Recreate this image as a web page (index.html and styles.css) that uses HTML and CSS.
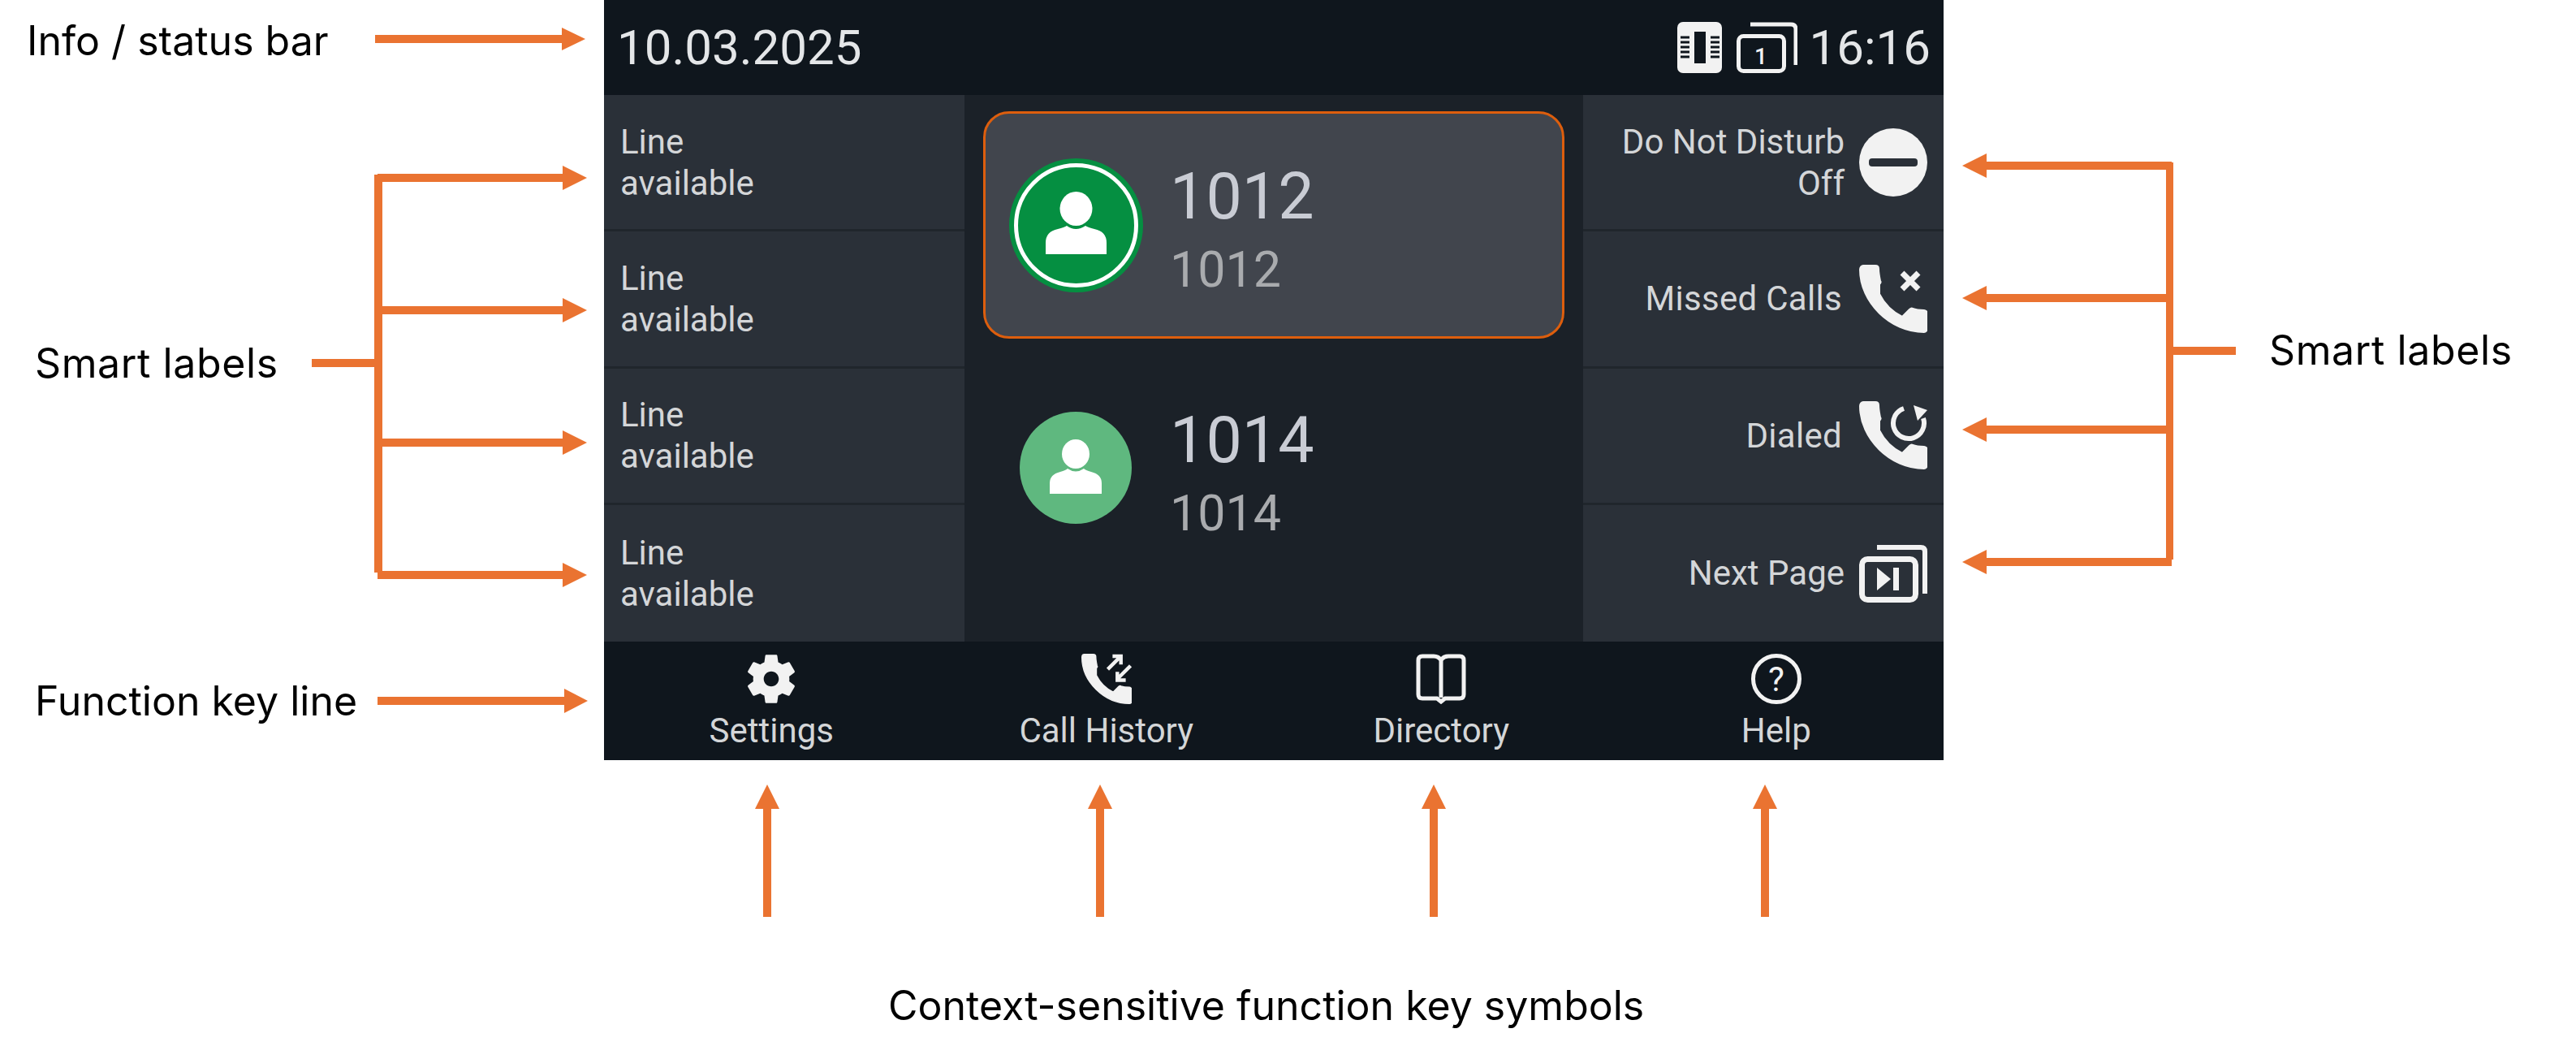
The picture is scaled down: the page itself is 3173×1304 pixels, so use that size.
FILE: index.html
```html
<!DOCTYPE html>
<html lang="en">
<head>
  <meta charset="UTF-8">
  <title>Phone display overview</title>
  <link rel="stylesheet" href="styles.css">
</head>
<body>
  <div class="stage">

    <!-- Phone display -->
    <div class="phone">
      <div class="status-bar">
        <span class="date">10.03.2025</span>
        <div class="status-right">
          <svg class="icon-sim" viewBox="0 0 55 63">
            <rect width="55" height="63" rx="7" fill="#f2f2f2"/>
            <rect x="21" y="12" width="14" height="39" fill="#0f161d"/>
            <path d="M4 19h11M4 25h11M4 31h11M4 37h11M4 43h11M41 19h11M41 25h11M41 31h11M41 37h11M41 43h11" stroke="#0f161d" stroke-width="3"/>
          </svg>
          <svg class="icon-pages" viewBox="0 0 75 63">
            <path d="M17 3h50q6 0 6 6v44" fill="none" stroke="#f2f2f2" stroke-width="5"/>
            <rect x="2.500" y="17.500" width="56" height="43" rx="6" fill="#0f161d" stroke="#f2f2f2" stroke-width="5"/>
            <text x="30" y="52" class="page-no">1</text>
          </svg>
          <span class="time">16:16</span>
        </div>
      </div>

      <div class="main">
        <div class="labels labels-left">
          <div class="label-row"><span>Line<br>available</span></div>
          <div class="label-row"><span>Line<br>available</span></div>
          <div class="label-row"><span>Line<br>available</span></div>
          <div class="label-row"><span>Line<br>available</span></div>
        </div>

        <div class="calls">
          <div class="contact active">
            <div class="avatar-slot">
              <svg class="avatar avatar-big" viewBox="0 0 165 165">
                <circle cx="82.5" cy="82.5" r="82.5" fill="#058f41"/>
                <circle cx="82.5" cy="82.5" r="74" fill="none" stroke="#fff" stroke-width="5"/>
                <ellipse cx="82.5" cy="62" rx="20" ry="21" fill="#fff"/>
                <path d="M45 118v-14q0-14 15-17 8-2 11-4 11 8 23 0 3 2 11 4 15 3 15 17v14z" fill="#fff"/>
              </svg>
            </div>
            <div class="numbers">
              <div class="number">1012</div>
              <div class="sub-number">1012</div>
            </div>
          </div>
          <div class="contact">
            <div class="avatar-slot">
              <svg class="avatar avatar-small" viewBox="0 0 138 138">
                <circle cx="69" cy="69" r="69" fill="#5fb87f"/>
                <ellipse cx="69" cy="52" rx="17" ry="18" fill="#fff"/>
                <path d="M37 101v-13q0-11 13-14 7-2 9-4 10 7 20 0 2 2 9 4 13 3 13 14v13z" fill="#fff"/>
              </svg>
            </div>
            <div class="numbers">
              <div class="number">1014</div>
              <div class="sub-number">1014</div>
            </div>
          </div>
        </div>

        <div class="labels labels-right">
          <div class="label-row">
            <span>Do Not Disturb<br>Off</span>
            <svg class="label-icon" viewBox="0 0 84 84">
              <circle cx="42" cy="42" r="42" fill="#f2f2f2"/>
              <rect x="12" y="37" width="60" height="10" rx="4" fill="#2a3038"/>
            </svg>
          </div>
          <div class="label-row wide-gap">
            <span>Missed Calls</span>
            <svg class="label-icon" viewBox="0 0 84 84">
              <path class="handset" d="M25 36c6 12 16 22 28 28l9-9c1-1 3-2 4-1 5 2 10 2 14 2 2 0 4 2 4 4v18c0 3-2 5-4 5C38 83 1 46 1 6c0-3 2-5 4-5h15c3 0 4 2 4 4 0 5 1 10 2 15 1 1 0 3-1 4z"/>
              <path d="M53 10l20 20M73 10L53 30" stroke="#f2f2f2" stroke-width="7" fill="none"/>
            </svg>
          </div>
          <div class="label-row wide-gap">
            <span>Dialed</span>
            <svg class="label-icon" viewBox="0 0 84 84">
              <path class="handset" d="M25 36c6 12 16 22 28 28l9-9c1-1 3-2 4-1 5 2 10 2 14 2 2 0 4 2 4 4v18c0 3-2 5-4 5C38 83 1 46 1 6c0-3 2-5 4-5h15c3 0 4 2 4 4 0 5 1 10 2 15 1 1 0 3-1 4z"/>
              <path d="M55 9a19 19 0 1 0 24 12" stroke="#f2f2f2" stroke-width="6" fill="none"/>
              <path d="M67 5l17 6-12 13z" fill="#f2f2f2"/>
            </svg>
          </div>
          <div class="label-row">
            <span>Next Page</span>
            <svg class="label-icon" viewBox="0 0 84 72">
              <path d="M22 4h54q5 0 5 5v52" fill="none" stroke="#f2f2f2" stroke-width="6"/>
              <rect x="3.500" y="18.500" width="66" height="50" rx="7" fill="#2a3038" stroke="#f2f2f2" stroke-width="7"/>
              <path d="M22 29l17 14-17 14z" fill="#f2f2f2"/>
              <rect x="42" y="29" width="7" height="28" fill="#f2f2f2"/>
            </svg>
          </div>
        </div>
      </div>

      <div class="function-keys">
        <div class="fkey">
          <svg class="fkey-icon" viewBox="2.6 2 18.8 20">
            <path fill-rule="evenodd" d="M19.14 12.94c.04-.3.06-.61.06-.94 0-.32-.02-.64-.07-.94l2.03-1.58c.18-.14.23-.41.12-.61l-1.92-3.32c-.12-.22-.37-.29-.59-.22l-2.39.96c-.5-.38-1.03-.7-1.62-.94l-.36-2.54c-.04-.24-.24-.41-.48-.41h-3.84c-.24 0-.43.17-.47.41l-.36 2.54c-.59.24-1.13.57-1.62.94l-2.39-.96c-.22-.08-.47 0-.59.22L2.74 8.87c-.12.21-.08.47.12.61l2.03 1.58c-.05.3-.09.63-.09.94s.02.64.07.94l-2.03 1.58c-.18.14-.23.41-.12.61l1.92 3.32c.12.22.37.29.59.22l2.39-.96c.5.38 1.03.7 1.62.94l.36 2.54c.05.24.24.41.48.41h3.84c.24 0 .44-.17.47-.41l.36-2.54c.59-.24 1.13-.56 1.62-.94l2.39.96c.22.08.47 0 .59-.22l1.92-3.32c.12-.22.07-.47-.12-.61l-2.01-1.58zM12 15c-1.65 0-3-1.35-3-3s1.35-3 3-3 3 1.35 3 3-1.35 3-3 3z" fill="#f2f2f2"/>
          </svg>
          <span>Settings</span>
        </div>
        <div class="fkey">
          <svg class="fkey-icon" viewBox="0 0 84 84">
            <path class="handset" d="M25 36c6 12 16 22 28 28l9-9c1-1 3-2 4-1 5 2 10 2 14 2 2 0 4 2 4 4v18c0 3-2 5-4 5C38 83 1 46 1 6c0-3 2-5 4-5h15c3 0 4 2 4 4 0 5 1 10 2 15 1 1 0 3-1 4z"/>
            <path d="M44 26L64 6M52 4h14v14M82 20L62 40M74 44H60V30" stroke="#f2f2f2" stroke-width="6" fill="none"/>
          </svg>
          <span>Call History</span>
        </div>
        <div class="fkey">
          <svg class="fkey-icon" viewBox="0 0 62 62">
            <path d="M31 8q-3-5-9-5H8q-5 0-5 5v42q0 5 5 5h18l5 4 5-4h18q5 0 5-5V8q0-5-5-5H40q-6 0-9 5zM31 8v46" fill="none" stroke="#f2f2f2" stroke-width="5"/>
          </svg>
          <span>Directory</span>
        </div>
        <div class="fkey">
          <svg class="fkey-icon" viewBox="0 0 62 62">
            <circle cx="31" cy="31" r="28.5" fill="none" stroke="#f2f2f2" stroke-width="5"/>
            <text x="31" y="46" class="help-mark">?</text>
          </svg>
          <span>Help</span>
        </div>
      </div>
    </div>

    <!-- Arrows -->
    <svg class="arrows" viewBox="0 0 3173 1304">
      <g fill="#ea7331">
        <rect x="462" y="43" width="232" height="10"/><path d="M692 34l29 14-29 14z"/>

        <rect x="461" y="215" width="10" height="490"/>
        <rect x="384" y="442" width="78" height="10"/>
        <rect x="465" y="214" width="230" height="10"/><path d="M693 204l30 15-30 15z"/>
        <rect x="465" y="377" width="230" height="10"/><path d="M693 367l30 15-30 15z"/>
        <rect x="465" y="540" width="230" height="10"/><path d="M693 530l30 15-30 15z"/>
        <rect x="465" y="703" width="230" height="10"/><path d="M693 693l30 15-30 15z"/>

        <rect x="465" y="858" width="232" height="10"/><path d="M695 848l29 15-29 15z"/>

        <rect x="2445" y="199" width="230" height="10"/><path d="M2447 189l-30 15 30 15z"/>
        <rect x="2445" y="362" width="225" height="10"/><path d="M2447 352l-30 15 30 15z"/>
        <rect x="2445" y="524" width="225" height="10"/><path d="M2447 514l-30 15 30 15z"/>
        <rect x="2445" y="687" width="230" height="10"/><path d="M2447 677l-30 15 30 15z"/>
        <rect x="2668" y="200" width="9" height="489"/>
        <rect x="2677" y="427" width="77" height="10"/>

        <rect x="940" y="995" width="10" height="134"/><path d="M945 966l15 30h-30z"/>
        <rect x="1350" y="995" width="10" height="134"/><path d="M1355 966l15 30h-30z"/>
        <rect x="1761" y="995" width="10" height="134"/><path d="M1766 966l15 30h-30z"/>
        <rect x="2169" y="995" width="10" height="134"/><path d="M2174 966l15 30h-30z"/>
      </g>
    </svg>

    <!-- Callouts -->
    <div class="note note-status">Info / status bar</div>
    <div class="note note-left">Smart labels</div>
    <div class="note note-fkey">Function key line</div>
    <div class="note note-right">Smart labels</div>
    <div class="note note-bottom">Context-sensitive function key symbols</div>
  </div>
</body>
</html>
```

FILE: styles.css
```css
/* Phone colours */
:root {
  --bar-bg: #0f161d;
  --label-bg: #2a3038;
  --center-bg: #1b2128;
  --divider: #20262c;
  --icon: #f2f2f2;
  --label-text: #d4d6d8;
}

* {
  margin: 0;
  padding: 0;
  box-sizing: border-box;
}

html, body {
  background: #fff;
  overflow: hidden;
}

.stage {
  position: relative;
  width: 3173px;
  height: 1304px;
  padding-left: 744px;
}

.phone {
  width: 1650px;
  height: 936px;
  display: flex;
  flex-direction: column;
  font-family: Roboto, sans-serif;
  color: var(--label-text);
  background: var(--center-bg);
}

/* Status bar */
.status-bar {
  height: 117px;
  flex: none;
  display: flex;
  justify-content: space-between;
  align-items: center;
  padding: 0 16px 0 16px;
  background: var(--bar-bg);
  font-size: 60px;
  color: #e4e6e8;
}

.status-right {
  display: flex;
  align-items: center;
}

.icon-sim {
  width: 55px;
  height: 63px;
  margin-right: 18px;
}

.icon-pages {
  width: 75px;
  height: 63px;
  margin-right: 15px;
}

.page-no {
  font-family: Roboto, sans-serif;
  font-size: 28px;
  font-weight: 500;
  fill: #f2f2f2;
  text-anchor: middle;
}

/* Middle part */
.main {
  flex: 1;
  display: grid;
  grid-template-columns: 444px 1fr 444px;
}

.labels {
  display: grid;
  grid-template-rows: repeat(4, 1fr);
  background: var(--label-bg);
}

.label-row {
  display: flex;
  align-items: center;
  font-size: 42px;
  line-height: 51px;
  border-bottom: 3px solid var(--divider);
}

.label-row:last-child {
  border-bottom: 0;
}

.labels-left .label-row {
  padding-left: 20px;
}

.labels-right .label-row {
  justify-content: flex-end;
  text-align: right;
  gap: 18px;
  padding-right: 20px;
}

.labels-right .wide-gap {
  gap: 21px;
  letter-spacing: 0.3px;
}

.label-icon {
  width: 84px;
  height: 84px;
  flex: none;
}

.label-row:last-child .label-icon {
  height: 72px;
}

.handset {
  fill: var(--icon);
  stroke: var(--icon);
  stroke-width: 2;
  stroke-linejoin: round;
}

.calls {
  padding: 20px 23px;
  display: flex;
  flex-direction: column;
  gap: 20px;
}

.contact {
  height: 280px;
  display: flex;
  align-items: center;
  gap: 32px;
  padding-left: 27px;
  border: 3px solid transparent;
  border-radius: 32px;
}

.contact.active {
  background: #41454d;
  border-color: #dd5e0d;
}

.avatar-slot {
  width: 168px;
  flex: none;
  display: flex;
  justify-content: center;
}

.avatar-big {
  width: 165px;
  height: 165px;
}

.avatar-small {
  width: 138px;
  height: 138px;
  margin-bottom: 3px;
}

.numbers {
  padding-top: 20px;
}

.number {
  font-size: 79px;
  line-height: 90px;
  color: #c9ccd4;
}

.sub-number {
  font-size: 61px;
  line-height: 90px;
  color: #a9abae;
}

/* Function keys */
.function-keys {
  height: 146px;
  flex: none;
  display: grid;
  grid-template-columns: repeat(4, 1fr);
  background: var(--bar-bg);
}

.fkey {
  display: flex;
  flex-direction: column;
  align-items: center;
  padding-top: 15px;
  font-size: 42px;
  line-height: 54px;
}

.fkey-icon {
  width: 62px;
  height: 62px;
  margin-bottom: 6px;
}

.help-mark {
  font-family: Roboto, sans-serif;
  font-size: 42px;
  fill: #f2f2f2;
  text-anchor: middle;
}

/* Callouts around the phone */
.arrows {
  position: absolute;
  top: 0;
  left: 0;
  width: 3173px;
  height: 1304px;
  pointer-events: none;
}

.note {
  position: absolute;
  font-family: Inter, sans-serif;
  font-size: 50px;
  line-height: 60px;
  color: #000;
  white-space: nowrap;
}

.note-status { left: 33px; top: 20px; }
.note-left { left: 43px; top: 417px; letter-spacing: 0.6px; }
.note-fkey { left: 43px; top: 833px; }
.note-right { left: 2795px; top: 401px; letter-spacing: 0.6px; }
.note-bottom { left: 1094px; top: 1208px; }
```
